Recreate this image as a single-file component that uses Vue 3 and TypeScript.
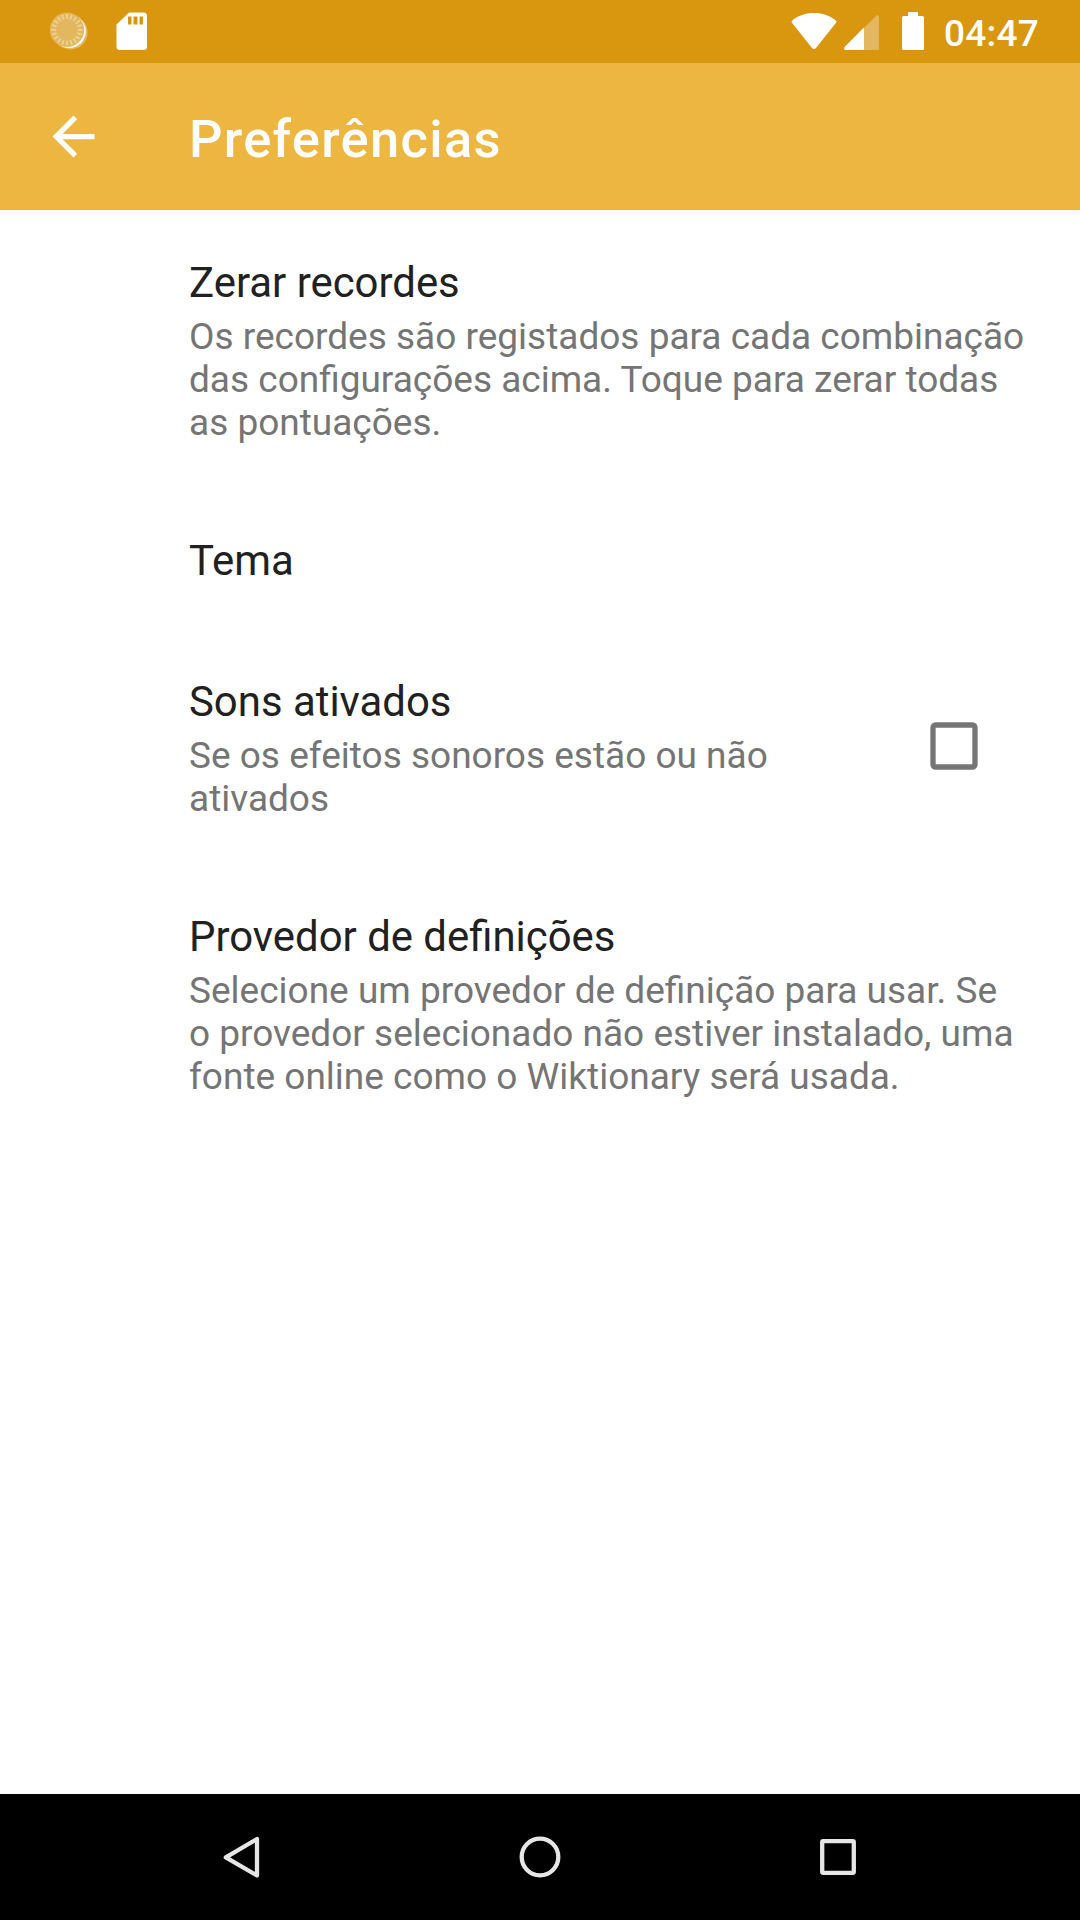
<script setup lang="ts">
interface Preference {
  id: string
  title: string
  summary: string[]
  checked?: boolean
}

const preferences: Preference[] = [
  {
    id: 'reset',
    title: 'Zerar recordes',
    summary: [
      'Os recordes são registados para cada combinação',
      'das configurações acima. Toque para zerar todas',
      'as pontuações.',
    ],
  },
  { id: 'theme', title: 'Tema', summary: [] },
  {
    id: 'sounds',
    title: 'Sons ativados',
    summary: ['Se os efeitos sonoros estão ou não', 'ativados'],
    checked: false,
  },
  {
    id: 'provider',
    title: 'Provedor de definições',
    summary: [
      'Selecione um provedor de definição para usar. Se',
      'o provedor selecionado não estiver instalado, uma',
      'fonte online como o Wiktionary será usada.',
    ],
  },
]

const ticks = Array.from({ length: 20 }, (_, i) => i * 18)
</script>

<template>
  <div class="screen">
    <header class="status">
      <svg class="sync" width="40" height="40" viewBox="0 0 40 40">
        <circle cx="20.6" cy="20.4" r="17" fill="#fff" fill-opacity=".35" />
        <circle cx="19" cy="19.3" r="16.8" fill="#fff" />
        <circle cx="17" cy="17.8" r="17.2" fill="#e3b75d" />
        <g stroke="#ecd097" stroke-width="1.9">
          <line v-for="a in ticks" :key="a" x1="17" y1="2" x2="17" y2="7" :transform="`rotate(${a} 17 17.8)`" />
        </g>
      </svg>
      <svg class="sd" width="32" height="40" viewBox="0 0 32 40">
        <path fill="#fff" fill-rule="evenodd" d="M13 .5H27.500Q31 .5 31 4V34.500Q31 38 27.500 38H4Q.5 38 .5 34.500V12.500zM12 4.500V12.500H15.500V4.500zM17.500 4.500V12.500H21.500V4.500zM23.500 4.500V12.500H27V4.500z" />
      </svg>
      <div class="spacer"></div>
      <svg class="wifi" width="46" height="38" viewBox="0 0 46 38">
        <path fill="#fff" d="M23 37Q21.900 37 21 35.900L.8 10.400Q.2 9.400 1.200 8.600C7 3.500 14.500 1 23 1S39 3.500 44.800 8.600Q45.800 9.400 45.200 10.400L25 35.900Q24.100 37 23 37z" />
      </svg>
      <svg class="signal" width="36" height="36" viewBox="0 0 36 36">
        <path fill="#e3b75d" d="M20 13L32.500.500Q35 -.5 35 2V34Q35 35 34 35H20z" />
        <path fill="#fff" d="M20 12.500V35H1Q-.5 34 .6 32z" />
      </svg>
      <svg class="battery" width="22" height="38" viewBox="0 0 22 38">
        <path fill="#fff" d="M6 0H16V4H20.500Q22 4 22 5.500V36.500Q22 38 20.500 38H1.500Q0 38 0 36.500V5.500Q0 4 1.500 4H6z" />
      </svg>
      <span class="clock">04:47</span>
    </header>

    <div class="toolbar">
      <svg class="back" width="63" height="63" viewBox="0 0 24 24">
        <path fill="#fff" d="M20 11H7.830l5.590-5.590L12 4l-8 8 8 8 1.410-1.410L7.830 13H20v-2z" />
      </svg>
      <h1>Preferências</h1>
    </div>

    <main class="list">
      <section v-for="p in preferences" :key="p.id" class="item">
        <div class="text">
          <h2>{{ p.title }}</h2>
          <p v-if="p.summary.length">
            <span v-for="line in p.summary" :key="line">{{ line }}</span>
          </p>
        </div>
        <svg v-if="p.checked !== undefined" class="check" width="48" height="48" viewBox="0 0 48 48">
          <rect x="3" y="3" width="42" height="42" rx="2.500" fill="none" stroke="#757575" stroke-width="5.300" />
        </svg>
      </section>
    </main>

    <nav class="nav">
      <svg width="126" height="126" viewBox="0 0 126 126">
        <path d="M46.800 63.300L78 45V81.500z" />
      </svg>
      <svg width="126" height="126" viewBox="0 0 126 126"><circle cx="63" cy="63" r="18.300" /></svg>
      <svg width="126" height="126" viewBox="0 0 126 126"><rect x="47.200" y="47.200" width="31.600" height="31.600" rx="1" /></svg>
    </nav>
  </div>
</template>

<style>
body {
  margin: 0;
}
</style>

<style scoped>
.screen {
  width: 1080px;
  height: 1920px;
  display: flex;
  flex-direction: column;
  overflow: hidden;
  background: #fff;
  font-family: Roboto, 'Liberation Sans', sans-serif;
}
.status {
  flex: none;
  height: 63px;
  box-sizing: border-box;
  padding: 0 41px 0 50px;
  display: flex;
  align-items: flex-start;
  background: #d8970f;
}
.sync {
  margin-top: 12px;
}
.sd {
  margin: 12px 0 0 25.5px;
}
.spacer {
  flex: 1;
}
.wifi {
  margin-top: 12px;
}
.signal {
  margin: 15px 0 0 7px;
}
.battery {
  margin: 12px 0 0 22px;
}
.clock {
  width: 95px;
  margin: 12px 0 0 20px;
  color: #fff;
  font-size: 37px;
  font-weight: 500;
  line-height: 43px;
  letter-spacing: 0.2px;
  white-space: nowrap;
}
.toolbar {
  flex: none;
  height: 147px;
  box-sizing: border-box;
  padding-left: 42px;
  display: flex;
  align-items: center;
  background: #edb641;
}
h1 {
  margin: 4px 0 0 84px;
  color: #fff;
  font-size: 52.5px;
  font-weight: 500;
  line-height: 62px;
  letter-spacing: 1.3px;
  white-space: nowrap;
}
.list {
  flex: 1;
  padding-top: 2px;
}
.item {
  display: flex;
  align-items: center;
  padding: 46px 102px 46px 189px;
}
.text {
  flex: 1;
  white-space: nowrap;
}
h2 {
  margin: 0;
  color: #212121;
  font-size: 41.9px;
  font-weight: 400;
  line-height: 49px;
}
p {
  margin: 8px 0 0;
  color: #757575;
  font-size: 37px;
  line-height: 43px;
}
p span {
  display: block;
}
.check {
  margin-bottom: 5px;
}
.nav {
  flex: none;
  height: 126px;
  display: flex;
  justify-content: center;
  gap: 172px;
  background: #000;
}
.nav svg {
  fill: none;
  stroke: #e6e6e6;
  stroke-width: 4.3;
  stroke-linejoin: round;
}
</style>
